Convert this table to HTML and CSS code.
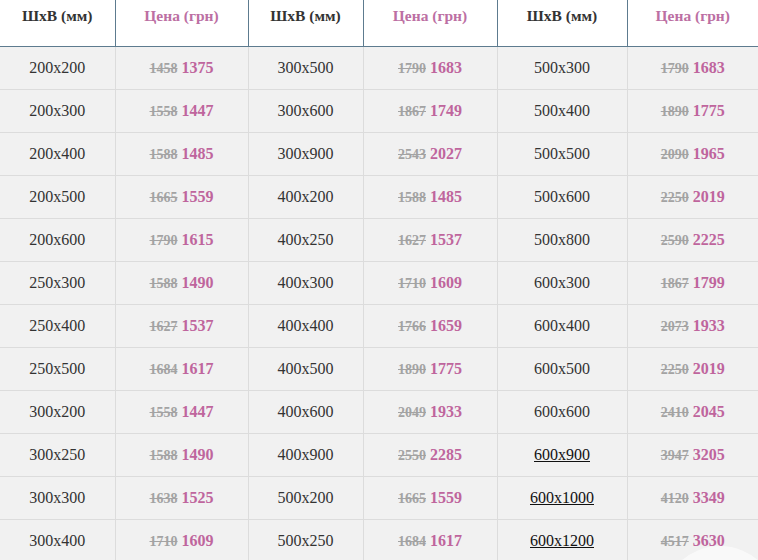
FILE: index.html
```html
<!DOCTYPE html>
<html lang="ru">
<head>
<meta charset="utf-8">
<link rel="stylesheet" href="styles.css">
</head>
<body>
<div class="wrap">
<table class="prices">
<colgroup>
<col class="c1"><col class="c2"><col class="c3"><col class="c4"><col class="c5"><col class="c6">
</colgroup>
<thead>
<tr>
<th class="sz">ШхВ (мм)</th><th class="pr">Цена (грн)</th>
<th class="sz">ШхВ (мм)</th><th class="pr">Цена (грн)</th>
<th class="sz">ШхВ (мм)</th><th class="pr">Цена (грн)</th>
</tr>
</thead>
<tbody>
<tr><td>200x200</td><td><s>1458</s> <b>1375</b></td><td>300x500</td><td><s>1790</s> <b>1683</b></td><td>500x300</td><td><s>1790</s> <b>1683</b></td></tr>
<tr><td>200x300</td><td><s>1558</s> <b>1447</b></td><td>300x600</td><td><s>1867</s> <b>1749</b></td><td>500x400</td><td><s>1890</s> <b>1775</b></td></tr>
<tr><td>200x400</td><td><s>1588</s> <b>1485</b></td><td>300x900</td><td><s>2543</s> <b>2027</b></td><td>500x500</td><td><s>2090</s> <b>1965</b></td></tr>
<tr><td>200x500</td><td><s>1665</s> <b>1559</b></td><td>400x200</td><td><s>1588</s> <b>1485</b></td><td>500x600</td><td><s>2250</s> <b>2019</b></td></tr>
<tr><td>200x600</td><td><s>1790</s> <b>1615</b></td><td>400x250</td><td><s>1627</s> <b>1537</b></td><td>500x800</td><td><s>2590</s> <b>2225</b></td></tr>
<tr><td>250x300</td><td><s>1588</s> <b>1490</b></td><td>400x300</td><td><s>1710</s> <b>1609</b></td><td>600x300</td><td><s>1867</s> <b>1799</b></td></tr>
<tr><td>250x400</td><td><s>1627</s> <b>1537</b></td><td>400x400</td><td><s>1766</s> <b>1659</b></td><td>600x400</td><td><s>2073</s> <b>1933</b></td></tr>
<tr><td>250x500</td><td><s>1684</s> <b>1617</b></td><td>400x500</td><td><s>1890</s> <b>1775</b></td><td>600x500</td><td><s>2250</s> <b>2019</b></td></tr>
<tr><td>300x200</td><td><s>1558</s> <b>1447</b></td><td>400x600</td><td><s>2049</s> <b>1933</b></td><td>600x600</td><td><s>2410</s> <b>2045</b></td></tr>
<tr><td>300x250</td><td><s>1588</s> <b>1490</b></td><td>400x900</td><td><s>2550</s> <b>2285</b></td><td><a href="#">600x900</a></td><td><s>3947</s> <b>3205</b></td></tr>
<tr><td>300x300</td><td><s>1638</s> <b>1525</b></td><td>500x200</td><td><s>1665</s> <b>1559</b></td><td><a href="#">600x1000</a></td><td><s>4120</s> <b>3349</b></td></tr>
<tr><td>300x400</td><td><s>1710</s> <b>1609</b></td><td>500x250</td><td><s>1684</s> <b>1617</b></td><td><a href="#">600x1200</a></td><td><s>4517</s> <b>3630</b></td></tr>
</tbody>
</table>
<div class="totop"></div>
</div>
</body>
</html>
```
FILE: styles.css
```css
html, body {
  margin: 0;
  padding: 0;
  background: #ffffff;
  overflow: hidden;
}
body {
  font-family: "Liberation Serif", Tinos, "Times New Roman", "DejaVu Serif", serif;
  color: #333333;
}
.wrap {
  position: relative;
  width: 758px;
  height: 560px;
  overflow: hidden;
}
.prices {
  border-collapse: collapse;
  table-layout: fixed;
  width: 758px;
  font-family: inherit;
}
.c1 { width: 115px; }
.c2 { width: 133px; }
.c3 { width: 115px; }
.c4 { width: 134px; }
.c5 { width: 130px; }
.c6 { width: 131px; }
.prices th {
  height: 46px;
  padding: 0 0 13px 0;
  box-sizing: border-box;
  font-family: inherit;
  font-size: 15.5px;
  font-weight: bold;
  text-align: center;
  vertical-align: middle;
  background: #ffffff;
  border-left: 1px solid #5d7b8f;
  border-bottom: 1px solid #5d7b8f;
}
.prices th:first-child { border-left: none; }
.prices th.sz { color: #333333; }
.prices th.pr { color: #bc6fa3; }
.prices td {
  height: 43px;
  box-sizing: border-box;
  padding: 0;
  text-align: center;
  vertical-align: middle;
  font-family: inherit;
  font-size: 16px;
  background: #f1f1f1;
  border: 1px solid #dcdcdc;
  color: #333333;
}
.prices tbody tr:first-child td { border-top: none; }
.prices td:first-child { border-left: none; }
.prices td:last-child { border-right: none; }
.prices s {
  color: #a3a3a3;
  font-size: 14px;
  font-weight: bold;
}
.prices b {
  color: #bf659d;
  font-size: 16px;
  font-weight: bold;
}
.prices a {
  color: #111111;
  text-decoration: underline;
}
.totop {
  position: absolute;
  left: 662px;
  top: 546px;
  width: 116px;
  height: 116px;
  border-radius: 50%;
  background: rgba(255, 255, 255, 0.6);
}
```
